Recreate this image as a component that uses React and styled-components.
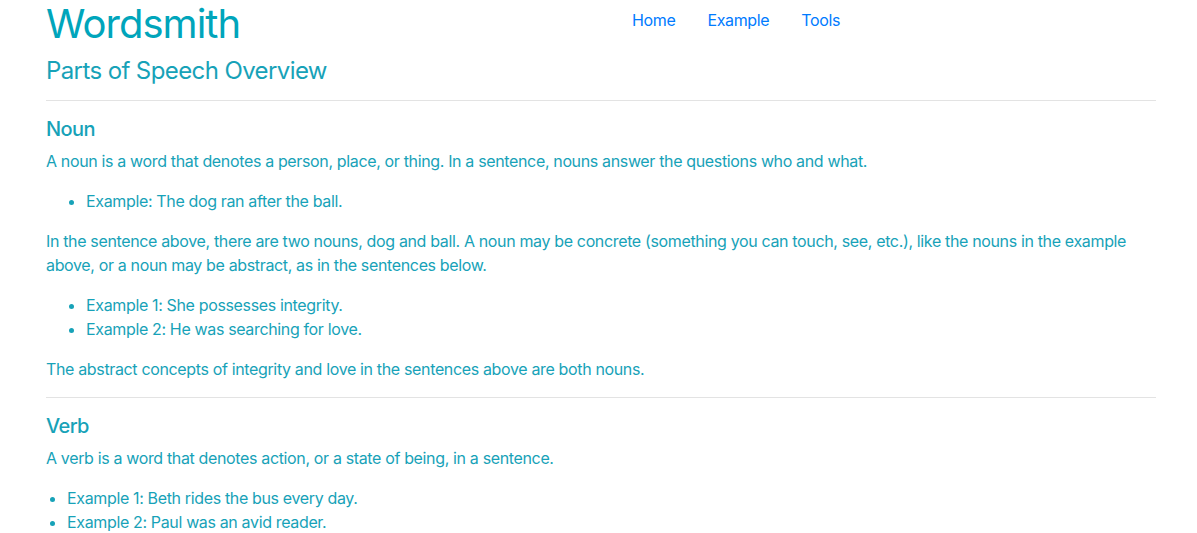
import React from "react";
import styled, { createGlobalStyle } from "styled-components";

const GlobalStyle = createGlobalStyle`
  body {
    margin: 0;
    background: #fff;
    font-family: Inter, "Liberation Sans", sans-serif;
    font-size: 16px;
    line-height: 24px;
    letter-spacing: -0.022em;
    color: #17a2b8;
  }
`;

const nouns = {
  title: "Noun",
  intro:
    "A noun is a word that denotes a person, place, or thing. In a sentence, nouns answer the questions who and what.",
};

export default function App() {
  return (
    <>
      <GlobalStyle />
      <Container>
        <Header>
          <Brand>
            <Title>Wordsmith</Title>
            <Subtitle>Parts of Speech Overview</Subtitle>
          </Brand>
          <Nav>
            <NavLink href="#">Home</NavLink>
            <NavLink href="#">Example</NavLink>
            <NavLink href="#">Tools</NavLink>
          </Nav>
        </Header>

        <Section>
          <Heading>{nouns.title}</Heading>
          <Para>{nouns.intro}</Para>
          <List>
            <li>Example: The dog ran after the ball.</li>
          </List>
          <Para>
            In the sentence above, there are two nouns, dog and ball. A noun may
            be concrete (something you can touch, see, etc.), like the nouns in
            the example above, or a noun may be abstract, as in the sentences
            below.
          </Para>
          <List>
            <li>Example 1: She possesses integrity.</li>
            <li>Example 2: He was searching for love.</li>
          </List>
          <Para>
            The abstract concepts of integrity and love in the sentences above
            are both nouns.
          </Para>
        </Section>

        <Section>
          <Heading>Verb</Heading>
          <Para>
            A verb is a word that denotes action, or a state of being, in a
            sentence.
          </Para>
          <List $flush>
            <li>Example 1: Beth rides the bus every day.</li>
            <li>Example 2: Paul was an avid reader.</li>
          </List>
        </Section>
      </Container>
    </>
  );
}

const Container = styled.div`
  width: 1110px;
  margin: 0 0 0 46px;
`;

const Header = styled.header`
  display: grid;
  grid-template-columns: 540px 1fr;
  column-gap: 30px;
  padding-bottom: 15px;
`;

const Brand = styled.div`
  display: flex;
  flex-direction: column;
`;

const Title = styled.h1`
  margin: 0 0 8px;
  font-size: 40px;
  line-height: 48px;
  font-weight: 400;
  letter-spacing: -0.024em;
  color: #00a5bb;
`;

const Subtitle = styled.h2`
  margin: 0;
  font-size: 24px;
  line-height: 29px;
  font-weight: 400;
  letter-spacing: -0.025em;
  color: #17a2b8;
`;

const Nav = styled.nav`
  display: flex;
  align-items: flex-start;
`;

const NavLink = styled.a`
  padding: 8px 16px;
  color: #007bff;
  text-decoration: none;
`;

const Section = styled.section`
  border-top: 1px solid #e3e3e3;
  padding-top: 16px;
`;

const Heading = styled.h3`
  margin: 0 0 8px;
  font-size: 20px;
  line-height: 24px;
  font-weight: 500;
  letter-spacing: -0.03em;
`;

const Para = styled.p`
  margin: 0 0 16px;
`;

const List = styled.ul`
  margin: 0 0 16px;
  padding-left: ${(p) => (p.$flush ? "21px" : "40px")};
`;
